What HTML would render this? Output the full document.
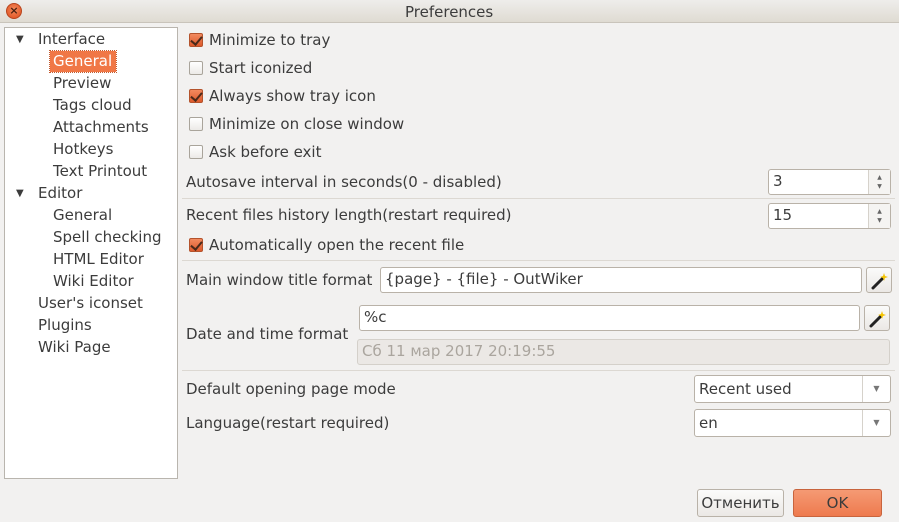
<!DOCTYPE html>
<html><head><meta charset="utf-8"><style>
*{box-sizing:border-box;margin:0;padding:0}
body{width:899px;height:522px;background:#f2f1f0;font-family:"DejaVu Sans","Liberation Sans",sans-serif;font-size:15px;color:#3c3c3c;position:relative;overflow:hidden}
.a{position:absolute;white-space:nowrap;line-height:18px}
#tb{position:absolute;left:0;top:0;width:899px;height:23px;background:linear-gradient(#eeedeb,#dfdbd2);border-bottom:1px solid #c9c4bb}
#close{position:absolute;left:6px;top:3px;width:16px;height:16px;border-radius:50%;background:radial-gradient(circle at 50% 40%,#f48a5c,#dd4c1b);border:1px solid #b8451e;color:#4a2010;font-size:11px;line-height:14px;text-align:center;font-weight:bold}
#tree{position:absolute;left:4px;top:27px;width:174px;height:452px;background:#fff;border:1px solid #b9b5ae}
.cb{position:absolute;width:14px;height:14px;border:1px solid #a9a49b;border-radius:2px;background:linear-gradient(#fff,#eceae7)}
.cb.on{background:linear-gradient(#f28a5f,#dd5a2c);border-color:#b4532c}
.cb.on::after{content:"";position:absolute;left:3px;top:0px;width:5px;height:9px;border:solid #4a2a1a;border-width:0 2px 2px 0;transform:rotate(40deg)}
.in{position:absolute;background:#fff;border:1px solid #b9b2a8;border-radius:3px;padding-left:4px;line-height:22px}
.sep{position:absolute;left:182px;width:713px;height:1px;background:#dcd8d2}
.spin{position:absolute;width:22px;border-left:1px solid #d6d2cb;right:0;top:0;bottom:0;background:#f5f4f2;font-size:6px;color:#666;text-align:center;line-height:9px;padding-top:3px}
.btn{position:absolute;border:1px solid #b9b2a8;border-radius:3px;background:linear-gradient(#fbfbfa,#ebe8e5);text-align:center}
.arr{position:absolute;right:0;top:0;bottom:0;width:28px;border-left:1px solid #d6d2cb;font-size:8px;color:#777;text-align:center;line-height:26px}
.btn svg{position:absolute;left:4px;top:4px}
</style></head><body>
<div id="tb"><div id="close">×</div><div class="a" style="left:405px;top:3px;color:#3c3c3c">Preferences</div></div>
<div id="tree">
<div class="a" style="left:11px;top:3px;font-size:10px">▼</div>
<div class="a" style="left:33px;top:2px">Interface</div>
<div class="a" style="left:45px;top:23px;width:66px;height:21px;background:#f07746;outline:1px dotted #c25a2e"></div>
<div class="a" style="left:48px;top:24px;color:#fff">General</div>
<div class="a" style="left:48px;top:46px">Preview</div>
<div class="a" style="left:48px;top:68px">Tags cloud</div>
<div class="a" style="left:48px;top:90px">Attachments</div>
<div class="a" style="left:48px;top:112px">Hotkeys</div>
<div class="a" style="left:48px;top:134px">Text Printout</div>
<div class="a" style="left:11px;top:157px;font-size:10px">▼</div>
<div class="a" style="left:33px;top:156px">Editor</div>
<div class="a" style="left:48px;top:178px">General</div>
<div class="a" style="left:48px;top:200px">Spell checking</div>
<div class="a" style="left:48px;top:222px">HTML Editor</div>
<div class="a" style="left:48px;top:244px">Wiki Editor</div>
<div class="a" style="left:33px;top:266px">User's iconset</div>
<div class="a" style="left:33px;top:288px">Plugins</div>
<div class="a" style="left:33px;top:310px">Wiki Page</div>
</div>

<div class="cb on" style="left:189px;top:33px"></div><div class="a" style="left:209px;top:31px">Minimize to tray</div>
<div class="cb" style="left:189px;top:61px"></div><div class="a" style="left:209px;top:59px">Start iconized</div>
<div class="cb on" style="left:189px;top:89px"></div><div class="a" style="left:209px;top:87px">Always show tray icon</div>
<div class="cb" style="left:189px;top:117px"></div><div class="a" style="left:209px;top:115px">Minimize on close window</div>
<div class="cb" style="left:189px;top:145px"></div><div class="a" style="left:209px;top:143px">Ask before exit</div>

<div class="a" style="left:186px;top:173px">Autosave interval in seconds(0 - disabled)</div>
<div class="in" style="left:768px;top:169px;width:123px;height:26px">3<div class="spin">▲<br>▼</div></div>
<div class="sep" style="top:198px"></div>
<div class="a" style="left:186px;top:206px">Recent files history length(restart required)</div>
<div class="in" style="left:768px;top:203px;width:123px;height:26px">15<div class="spin">▲<br>▼</div></div>
<div class="cb on" style="left:189px;top:238px"></div><div class="a" style="left:209px;top:236px">Automatically open the recent file</div>
<div class="sep" style="top:260px"></div>

<div class="a" style="left:186px;top:271px">Main window title format</div>
<div class="in" style="left:380px;top:267px;width:482px;height:26px">{page} - {file} - OutWiker</div>
<div class="btn" style="left:866px;top:267px;width:26px;height:26px"><svg width="18" height="18" viewBox="0 0 18 18"><path d="M2 16 L11 7" stroke="#222" stroke-width="3" stroke-linecap="round"/><path d="M13 1 L14 4 L17 5 L14 6 L13 9 L12 6 L9 5 L12 4Z" fill="#f5c400"/></svg></div>
<div class="a" style="left:186px;top:325px">Date and time format</div>
<div class="in" style="left:359px;top:305px;width:501px;height:26px">%c</div>
<div class="btn" style="left:864px;top:305px;width:26px;height:26px"><svg width="18" height="18" viewBox="0 0 18 18"><path d="M2 16 L11 7" stroke="#222" stroke-width="3" stroke-linecap="round"/><path d="M13 1 L14 4 L17 5 L14 6 L13 9 L12 6 L9 5 L12 4Z" fill="#f5c400"/></svg></div>
<div class="in" style="left:357px;top:339px;width:533px;height:26px;background:#ebe8e5;border-color:#d4d0ca;color:#aaa59e">Сб 11 мар 2017 20:19:55</div>
<div class="sep" style="top:370px"></div>

<div class="a" style="left:186px;top:380px">Default opening page mode</div>
<div class="in" style="left:694px;top:375px;width:197px;height:28px;line-height:26px">Recent used<div class="arr">▼</div></div>
<div class="a" style="left:186px;top:414px">Language(restart required)</div>
<div class="in" style="left:694px;top:409px;width:197px;height:28px;line-height:26px">en<div class="arr">▼</div></div>

<div class="btn" style="left:697px;top:489px;width:87px;height:28px;line-height:26px">Отменить</div>
<div class="btn" style="left:793px;top:489px;width:89px;height:28px;line-height:26px;background:linear-gradient(#f59a74,#ee7a4e);border-color:#c8643d">OK</div>
</body></html>
